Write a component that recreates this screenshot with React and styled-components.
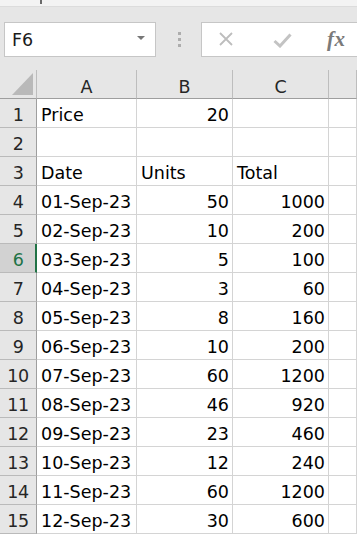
import React from "react";
import styled, { createGlobalStyle } from "styled-components";

const GlobalStyle = createGlobalStyle`
  html, body { margin: 0; padding: 0; background: #ffffff; }
  body { font-family: "DejaVu Sans", "Liberation Sans", Arial, sans-serif; overflow: hidden; }
  * { box-sizing: border-box; }
`;

const Page = styled.div`
  width: 357px;
  height: 534px;
  display: flex;
  flex-direction: column;
  overflow: hidden;
  background: #ffffff;
`;

const TopStrip = styled.div`
  height: 7px;
  background: #f3f3f3;
  border-bottom: 1px solid #dcdcdc;
  padding-left: 40px;
  display: flex;
  align-items: flex-start;
`;

const Tick = styled.div`
  width: 2px;
  height: 4px;
  background: #6a6a6a;
`;

const FormulaRow = styled.div`
  height: 65px;
  background: #e6e6e6;
  display: flex;
  align-items: flex-start;
  padding: 15px 0 0 4px;
`;

const NameBox = styled.div`
  width: 152px;
  height: 35px;
  background: #ffffff;
  border: 1px solid #c6c6c6;
  display: flex;
  align-items: center;
  justify-content: space-between;
  padding: 1px 10px 0 7px;
  font-size: 17.5px;
  color: #1a1a1a;
`;

const Caret = styled.div`
  width: 0;
  height: 0;
  border-left: 4px solid transparent;
  border-right: 4px solid transparent;
  border-top: 4px solid #777777;
  margin-top: -3px;
`;

const Grip = styled.div`
  width: 45px;
  height: 35px;
  display: flex;
  flex-direction: column;
  align-items: center;
  justify-content: center;
  gap: 3px;
  padding-left: 1px;
`;

const Dot = styled.div`
  width: 3px;
  height: 3px;
  background: #adadad;
`;

const FormulaBox = styled.div`
  flex: 1;
  height: 35px;
  background: #ffffff;
  border: 1px solid #c6c6c6;
  border-right: none;
  display: flex;
  align-items: center;
  padding-left: 16px;
`;

const IconSlot = styled.div`
  width: ${(p) => p.$w}px;
  margin-right: ${(p) => p.$mr}px;
  display: flex;
  align-items: center;
  justify-content: center;
  margin-top: ${(p) => p.$mt || 0}px;
`;

const Fx = styled.span`
  font-family: "Liberation Serif", "Times New Roman", serif;
  font-style: italic;
  font-weight: bold;
  font-size: 21px;
  color: #7a7a7a;
  letter-spacing: 0.5px;
  margin-top: 1px;
`;

const Sheet = styled.div`
  display: grid;
  grid-template-columns: 37px 100px 96px 96px 1fr;
  grid-auto-rows: 29px;
  font-size: 17.5px;
`;

const Corner = styled.div`
  background: #e6e6e6;
  border-right: 1px solid #bdbdbd;
  border-bottom: 1px solid #9e9e9e;
  display: flex;
  align-items: flex-end;
  justify-content: flex-end;
  padding: 0 3px 3px 0;
`;

const CornerTriangle = styled.div`
  width: 21px;
  height: 22px;
  background: #b9b9b9;
  clip-path: polygon(100% 0, 100% 100%, 0 100%);
`;

const ColHeader = styled.div`
  background: #e6e6e6;
  border-right: 1px solid #bdbdbd;
  border-bottom: 1px solid #9e9e9e;
  text-align: center;
  padding-top: 5px;
  line-height: 24px;
  color: #262626;
`;

const RowHeader = styled.div`
  background: ${(p) => (p.$active ? "#d2d2d2" : "#e6e6e6")};
  color: ${(p) => (p.$active ? "#217346" : "#262626")};
  border-right: ${(p) => (p.$active ? "2px solid #217346" : "1px solid #9e9e9e")};
  border-bottom: 1px solid #bababa;
  text-align: center;
  padding-top: 4px;
  padding-left: ${(p) => (p.$active ? "1px" : "0")};
  line-height: 24px;
  white-space: nowrap;
  letter-spacing: -0.5px;
`;

const Cell = styled.div`
  border-right: 1px solid #d4d4d4;
  border-bottom: 1px solid #d4d4d4;
  padding: 4px 3px 0 4px;
  line-height: 24px;
  color: #000000;
  text-align: ${(p) => (p.$num ? "right" : "left")};
  white-space: nowrap;
  overflow: hidden;
`;

const XIcon = () => (
  <svg width="14" height="14" viewBox="0 0 14 14">
    <path d="M1 1 L13 13 M13 1 L1 13" stroke="#bdbdbd" strokeWidth="1.8" fill="none" />
  </svg>
);

const CheckIcon = () => (
  <svg width="19" height="15" viewBox="0 0 19 15">
    <path d="M1.5 8 L7 13 L17.5 1.5" stroke="#c3c3c3" strokeWidth="3" fill="none" />
  </svg>
);

const units = [50, 10, 5, 3, 8, 10, 60, 46, 23, 12, 60, 30];
const totals = [1000, 200, 100, 60, 160, 200, 1200, 920, 460, 240, 1200, 600];

const rows = [
  ["Price", 20, ""],
  ["", "", ""],
  ["Date", "Units", "Total"],
  ...units.map((u, i) => [
    `${String(i + 1).padStart(2, "0")}-Sep-23`,
    u,
    totals[i],
  ]),
];

export default function App() {
  return (
    <Page>
      <GlobalStyle />
      <TopStrip>
        <Tick />
      </TopStrip>
      <FormulaRow>
        <NameBox>
          <span>F6</span>
          <Caret />
        </NameBox>
        <Grip>
          <Dot />
          <Dot />
          <Dot />
        </Grip>
        <FormulaBox>
          <IconSlot $w={16} $mr={38}>
            <XIcon />
          </IconSlot>
          <IconSlot $w={20} $mr={35} $mt={2}>
            <CheckIcon />
          </IconSlot>
          <Fx>fx</Fx>
        </FormulaBox>
      </FormulaRow>
      <Sheet>
        <Corner>
          <CornerTriangle />
        </Corner>
        {["A", "B", "C", ""].map((c, i) => (
          <ColHeader key={i}>{c}</ColHeader>
        ))}
        {rows.map((r, i) => (
          <React.Fragment key={i}>
            <RowHeader $active={i === 5}>{i + 1}</RowHeader>
            {r.map((v, j) => (
              <Cell key={j} $num={typeof v === "number"}>
                {v}
              </Cell>
            ))}
            <Cell />
          </React.Fragment>
        ))}
      </Sheet>
    </Page>
  );
}
